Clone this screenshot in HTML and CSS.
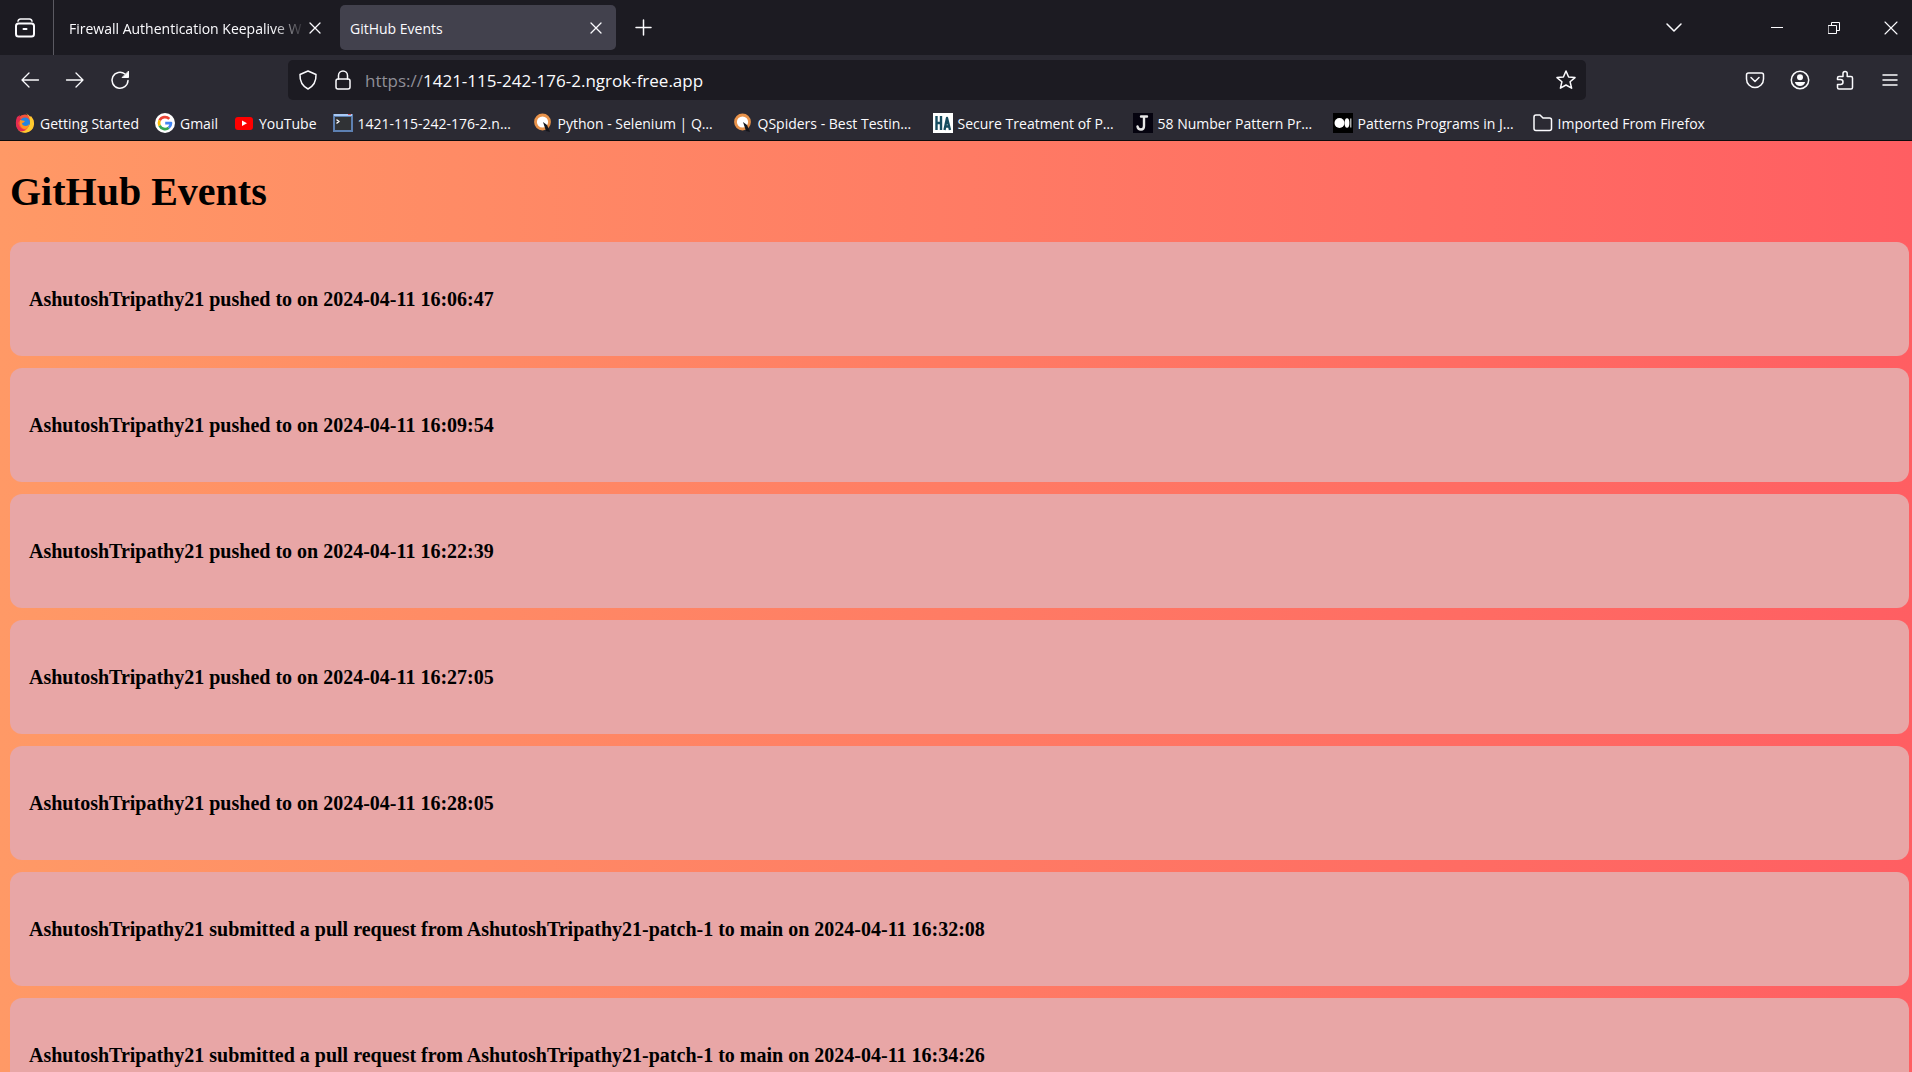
FILE: index.html
```html
<!DOCTYPE html>
<html lang="en">
<head>
<meta charset="utf-8">
<title>GitHub Events</title>
<link rel="stylesheet" href="styles.css">
</head>
<body>
<header class="chrome">
  <div class="titlebar">
    <button class="view-btn" aria-label="Firefox View"><svg width="22" height="22" viewBox="0 0 22 22"><path d="M4 4.200Q4.500 2 6.500 2h9Q17.500 2 18 4.200"/><rect x="2" y="6.500" width="18" height="13" rx="2.500" stroke-width="2"/><path d="M9.500 12h3" stroke-width="2"/></svg></button>
    <div class="tabs">
      <div class="tab"><span class="tab-title fade">Firewall Authentication Keepalive W</span><button class="tab-close" aria-label="Close tab"><svg width="12" height="12" viewBox="0 0 12 12"><path d="M1 1l10 10M11 1L1 11" stroke-width="1.300"/></svg></button></div>
      <div class="tab active"><span class="tab-title">GitHub Events</span><button class="tab-close" aria-label="Close tab"><svg width="12" height="12" viewBox="0 0 12 12"><path d="M1 1l10 10M11 1L1 11" stroke-width="1.300"/></svg></button></div>
      <button class="tool" aria-label="New tab"><svg width="17" height="17" viewBox="0 0 17 17"><path d="M8.500 1v15M1 8.500h15"/></svg></button>
    </div>
    <button class="win list-tabs" aria-label="List all tabs"><svg width="18" height="12" viewBox="0 0 18 12"><path d="M2 2l7 7 7-7"/></svg></button>
    <div class="win-controls">
      <button class="win" aria-label="Minimize"><svg width="12" height="12" viewBox="0 0 12 12"><path d="M0 5.500h12" stroke-width="1"/></svg></button>
      <button class="win" aria-label="Restore"><svg width="12" height="12" viewBox="0 0 12 12"><path d="M.5 3.500h8v8h-8zM3.500 3.500v-3h8v8h-3" stroke-width="1" stroke-linejoin="miter"/></svg></button>
      <button class="win" aria-label="Close window"><svg width="14" height="14" viewBox="0 0 14 14"><path d="M1 1l12 12M13 1L1 13" stroke-width="1.100"/></svg></button>
    </div>
  </div>
  <nav class="navbar">
    <button class="tool" aria-label="Back"><svg width="20" height="18" viewBox="0 0 20 18"><path d="M18.500 9H2M9 2L2 9l7 7" stroke-width="1.300"/></svg></button>
    <button class="tool" aria-label="Forward"><svg width="20" height="18" viewBox="0 0 20 18"><path d="M1.500 9H18M11 2l7 7-7 7" stroke-width="1.300"/></svg></button>
    <button class="tool" aria-label="Reload"><svg width="20" height="20" viewBox="0 0 20 20"><path d="M15 4A8 8 0 1 0 18 10.500"/><path d="M18.500 1.500v6h-6z" fill="currentColor" stroke-width="1"/></svg></button>
    <div class="urlbar">
      <div class="site-info">
        <svg width="20" height="20" viewBox="0 0 20 20"><path d="M10 1L18 4.500q.5 10-8 14.500Q1.500 14.500 2 4.500z"/></svg>
        <svg width="20" height="20" viewBox="0 0 20 20"><rect x="3" y="9" width="14" height="10" rx="2"/><path d="M5.500 9V5.500a4.500 4.500 0 0 1 9 0V9"/></svg>
      </div>
      <div class="url"><span class="dim">https://</span>1421-115-242-176-2.ngrok-free.app</div>
      <button class="star" aria-label="Bookmark this page"><svg width="20" height="20" viewBox="0 0 20 20"><path d="M10 1l2.600 6 6.400.6-4.900 4.200 1.500 6.400L10 15l-5.600 3.200 1.500-6.400L1 7.600 7.400 7z"/></svg></button>
    </div>
    <button class="tool" aria-label="Save to Pocket"><svg width="20" height="20" viewBox="0 0 20 20"><path d="M3.500 3h13q2 0 2 2v4a8.500 8.500 0 0 1-17 0V5q0-2 2-2z"/><path d="M6 7.500l4 4 4-4"/></svg></button>
    <button class="tool" aria-label="Account"><svg width="20" height="20" viewBox="0 0 20 20"><circle cx="10" cy="10" r="8.700"/><circle cx="10" cy="7.300" r="3" fill="currentColor" stroke="none"/><path d="M4.800 12h10.400q-1.200 4-5.200 4t-5.200-4z" fill="currentColor" stroke="none"/></svg></button>
    <button class="tool" aria-label="Extensions"><svg width="20" height="20" viewBox="0 0 20 20"><path d="M2.500 9.500V8q0-1.500 1.500-1.500h4v-3a2.100 2.100 0 0 1 4.200 0v3h3.800q1.500 0 1.500 1.500v9.500q0 1.500-1.500 1.500h-12q-1.500 0-1.500-1.500v-3h3a2.400 2.400 0 0 0 0-5z"/></svg></button>
    <button class="tool" aria-label="Menu"><svg width="16" height="14" viewBox="0 0 16 14"><path d="M1 2h14M1 7h14M1 12h14"/></svg></button>
  </nav>
  <nav class="bookmarks">
    <a href="#"><svg width="20" height="20" viewBox="0 0 20 20"><g stroke="none"><circle cx="10" cy="10.500" r="9" fill="#f5533a"/><path d="M11 0q3 2 4 4l1-1q3.500 4 3 8.500-1 7-8 8.300-5 .5-8-3 8 3 11-4Q17 6 11 0z" fill="#ffcb2f"/><path d="M2 4l3-2q-1 3 1 4l-3 4q2 7 8 7-7 4-9.500-3Q0 9 2 4z" fill="#e52b50"/><circle cx="10" cy="9.500" r="5" fill="#2385df"/><path d="M5 7l5 1q-1 2-3 2 0 3 4 3 2 0 3-2 0 5-5 5-5-1-4-9z" fill="#ff9420"/></g></svg><span>Getting Started</span></a>
    <a href="#"><svg width="20" height="20" viewBox="0 0 20 20"><circle cx="10" cy="10" r="10" fill="#fff" stroke="none"/><g stroke-width="2.700" stroke-linecap="butt"><path d="M14.300 5.900A6 6 0 0 0 4.600 7.400" stroke="#ea4335"/><path d="M4.600 7.400a6 6 0 0 0 0 5.200" stroke="#fbbc05"/><path d="M4.600 12.600A6 6 0 0 0 13.800 14.700" stroke="#34a853"/><path d="M13.800 14.700A6 6 0 0 0 16 10.100h-5.800" stroke="#4285f4"/></g></svg><span>Gmail</span></a>
    <a href="#"><svg width="20" height="20" viewBox="0 0 20 20"><rect x="1" y="4" width="18" height="13" rx="3" fill="#f00" stroke="none"/><path d="M8 7.500v5.500l5-2.700z" fill="#fff" stroke="none"/></svg><span>YouTube</span></a>
    <a class="long" href="#"><svg width="20" height="20" viewBox="0 0 20 20"><g stroke="none"><path d="M0 1h20v18H0z" fill="#5d80b2"/><path d="M1 1h18v2H1z" fill="#a9c9f4"/><path d="M15 1h3v1h-3z" fill="#d5555c"/><path d="M2 4h16v13H2z" fill="#303235"/></g><path d="M4 7l2 1.500L4 10" stroke="#fff"/></svg><span>1421-115-242-176-2.n…</span></a>
    <a class="long" href="#"><svg width="20" height="20" viewBox="0 0 20 20"><circle cx="9.500" cy="9" r="7" fill="#fff" stroke="#e8924a" stroke-width="2.800"/><path d="M10 9l4 3 3 7-4-1z" fill="#15161c" stroke="none"/></svg><span>Python - Selenium | Q…</span></a>
    <a class="long" href="#"><svg width="20" height="20" viewBox="0 0 20 20"><circle cx="9.500" cy="9" r="7" fill="#fff" stroke="#e8924a" stroke-width="2.800"/><path d="M10 9l4 3 3 7-4-1z" fill="#15161c" stroke="none"/></svg><span>QSpiders - Best Testin…</span></a>
    <a class="long" href="#"><svg width="20" height="20" viewBox="0 0 20 20"><path d="M0 0h20v20H0z" fill="#fff" stroke="none"/><path d="M3.500 3v14M8 3v14M3.500 10H8M11.500 17l2.500-12 3 12M12 13.500h4" stroke="#174d60" stroke-width="2.400" stroke-linecap="butt"/></svg><span>Secure Treatment of P…</span></a>
    <a class="long" href="#"><svg width="20" height="20" viewBox="0 0 20 20"><path d="M0 0h20v20H0z" fill="#05030f" stroke="none"/><path d="M8 3.500h6M11 4v9q0 3.500-3 3.500-3 0-3.500-3" stroke="#e6e6e6" stroke-width="2.400"/></svg><span>58 Number Pattern Pr…</span></a>
    <a class="long" href="#"><svg width="20" height="20" viewBox="0 0 20 20"><g stroke="none"><path d="M0 0h20v20H0z" fill="#000"/><circle cx="6.500" cy="10" r="5" fill="#fff"/><ellipse cx="14" cy="10" rx="2.400" ry="4.800" fill="#fff"/><path d="M17 5.500h1.500v9H17z" fill="#aaa"/></g></svg><span>Patterns Programs in J…</span></a>
    <a href="#"><svg width="20" height="20" viewBox="0 0 20 20"><path d="M1 4q0-2 2-2h4l3 3h6.500q2 0 2 2v8.500q0 2-2 2H3q-2 0-2-2z"/></svg><span>Imported From Firefox</span></a>
  </nav>
</header>
<main class="page">
  <h1>GitHub Events</h1>
  <div class="events">
    <article class="event">AshutoshTripathy21 pushed to on 2024-04-11 16:06:47</article>
    <article class="event">AshutoshTripathy21 pushed to on 2024-04-11 16:09:54</article>
    <article class="event">AshutoshTripathy21 pushed to on 2024-04-11 16:22:39</article>
    <article class="event">AshutoshTripathy21 pushed to on 2024-04-11 16:27:05</article>
    <article class="event">AshutoshTripathy21 pushed to on 2024-04-11 16:28:05</article>
    <article class="event">AshutoshTripathy21 submitted a pull request from AshutoshTripathy21-patch-1 to main on 2024-04-11 16:32:08</article>
    <article class="event">AshutoshTripathy21 submitted a pull request from AshutoshTripathy21-patch-1 to main on 2024-04-11 16:34:26</article>
  </div>
</main>
</body>
</html>
```
FILE: styles.css
```css
* {
  box-sizing: border-box;
}

body {
  margin: 0;
  height: 100vh;
  display: flex;
  flex-direction: column;
  overflow: hidden;
}

svg {
  display: block;
  flex: none;
  fill: none;
  stroke: currentColor;
  stroke-width: 1.5;
  stroke-linecap: round;
  stroke-linejoin: round;
}

button {
  display: flex;
  align-items: center;
  justify-content: center;
  flex: none;
  padding: 0;
  border: 0;
  background: none;
  color: inherit;
}

/* Browser window */
.chrome {
  flex: none;
  background: #2b2a33;
  color: #fbfbfe;
  border-bottom: 1px solid #0c0c0d;
  font: 14px/20px "Open Sans", "Noto Sans", sans-serif;
}

.titlebar {
  display: flex;
  height: 55px;
  background: #1c1b22;
}

.view-btn {
  width: 54px;
  padding-right: 4px;
  border-right: 1px solid #5b5a62;
}

.tabs {
  flex: 1;
  display: flex;
  align-items: center;
  gap: 5px;
  padding-left: 5px;
}

.tab {
  display: flex;
  align-items: center;
  width: 276px;
  height: 45px;
  padding: 0 10px;
  border-radius: 5px;
}

.active {
  background: #42414d;
}

.tab-title {
  flex: 1;
  padding-top: 2px;
  white-space: nowrap;
}

.fade {
  mask-image: linear-gradient(to left, transparent, #000 32px);
}

.tab-close {
  width: 20px;
  height: 20px;
}

.tool {
  width: 45px;
  height: 40px;
}

.win {
  width: 42px;
}

.list-tabs {
  margin-right: 61px;
}

.win-controls {
  display: flex;
  gap: 15px;
}

.navbar {
  display: flex;
  align-items: center;
  height: 50px;
  padding-left: 7px;
}

.urlbar {
  flex: 1;
  display: flex;
  align-items: center;
  gap: 12px;
  height: 40px;
  margin: 0 146px;
  padding: 0 10px;
  border-radius: 5px;
  background: #1c1b22;
}

.site-info {
  display: flex;
  gap: 15px;
}

.url {
  flex: 1;
  padding-top: 2px;
  font-size: 17px;
}

.dim {
  color: #8f8e96;
}

.bookmarks {
  display: flex;
  align-items: center;
  gap: 16px;
  height: 35px;
  padding: 0 15px;
}

.bookmarks a {
  display: flex;
  align-items: center;
  gap: 5px;
  color: inherit;
  text-decoration: none;
  white-space: nowrap;
}

.bookmarks span {
  padding-top: 2px;
}

.bookmarks .long {
  width: 184px;
}

/* Events page */
.page {
  flex: 1;
  min-height: 0;
  overflow-y: auto;
  scrollbar-width: none;
  padding: 27px 3px 10px 10px;
  background: linear-gradient(to right, #ff9966, #ff5e62);
  color: #000;
  font-family: "Liberation Serif", serif;
  font-weight: bold;
}

h1 {
  margin: 0 0 26px;
  font-size: 40px;
  line-height: 48px;
}

.events {
  display: flex;
  flex-direction: column;
  gap: 12px;
}

.event {
  padding: 45px 19px;
  border-radius: 12px;
  background: #e8a6a6;
  font-size: 20px;
  line-height: 24px;
}
```
